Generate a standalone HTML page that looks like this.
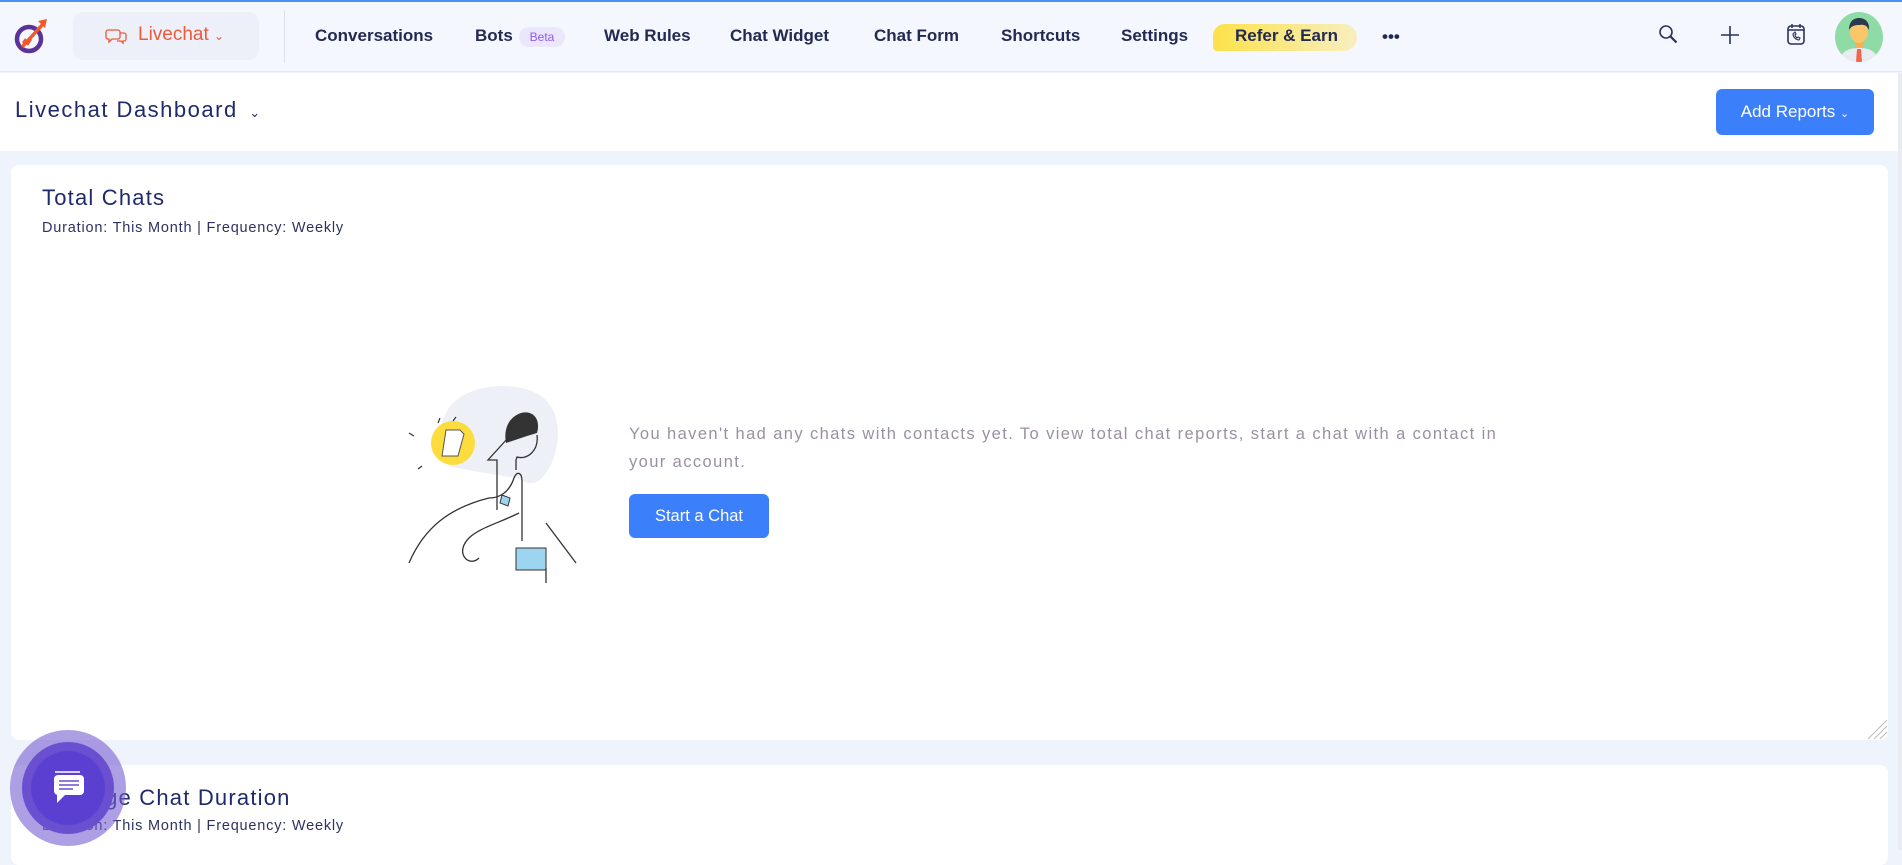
<!DOCTYPE html>
<html><head><meta charset="utf-8"><style>
*{box-sizing:border-box;margin:0;padding:0}
body{width:1902px;height:850px;overflow:hidden;background:#eff3fb;font-family:"Liberation Sans",sans-serif;color:#1c2356;position:relative}
.top{position:absolute;left:0;top:0;width:1902px;height:2px;background:#4a90f0}
.hdr{position:absolute;left:0;top:2px;width:1902px;height:70px;background:#f4f7fd;border-bottom:1px solid #e4e8f2}
.pill{position:absolute;left:73px;top:10px;width:186px;height:48px;background:#eef0f9;border-radius:10px}
.nav{position:absolute;top:24px;font-size:17px;font-weight:bold;color:#232a52}
.bar{position:absolute;left:0;top:73px;width:1902px;height:78px;background:#fff}
.card{position:absolute;left:11px;width:1877px;background:#fff;border-radius:8px}
.t{position:absolute;left:31px;font-size:22px;letter-spacing:1.2px;color:#1f2a6b}
.s{position:absolute;left:31px;font-size:14.5px;letter-spacing:0.8px;color:#2e3260}
</style></head><body>
<div class="top"></div>
<div class="hdr">
<svg style="position:absolute;left:14px;top:15px" width="36" height="38" viewBox="0 0 36 38"><circle cx="15" cy="22" r="12" fill="none" stroke="#5b3396" stroke-width="4.5"/><path d="M8 30 L30 6" stroke="#f0582a" stroke-width="3.5"/><path d="M24 4 L33 2 L31 11Z" fill="#f0582a"/><path d="M9 26l3-4M13 28l4-6" stroke="#f0582a" stroke-width="2.5"/></svg>
<div class="pill"></div>
<svg style="position:absolute;left:105px;top:26px" width="22" height="17" viewBox="0 0 22 17"><path d="M3 2h10a2 2 0 012 2v5a2 2 0 01-2 2H7l-3 3v-3H3a2 2 0 01-2-2V4a2 2 0 012-2z" fill="none" stroke="#ec5a3c" stroke-width="1.3"/><path d="M15 5h4a2 2 0 012 2v4a2 2 0 01-2 2h-1v2l-2-2h-4" fill="none" stroke="#ec5a3c" stroke-width="1.3"/></svg>
<div class="nav" style="left:138px;font-weight:normal;color:#ec5a3c;font-size:19px;top:22px">Livechat <span style="font-size:12px">&#8964;</span></div>
<div style="position:absolute;left:284px;top:9px;width:1px;height:52px;background:#dde1ec"></div>
<div class="nav" style="left:315px">Conversations</div>
<div class="nav" style="left:475px">Bots</div>
<div style="position:absolute;left:519px;top:25px;width:46px;height:20px;border-radius:10px;background:#ece6fd;color:#8a5cf5;font-size:12px;text-align:center;line-height:20px">Beta</div>
<div class="nav" style="left:604px">Web Rules</div>
<div class="nav" style="left:730px">Chat Widget</div>
<div class="nav" style="left:874px">Chat Form</div>
<div class="nav" style="left:1001px">Shortcuts</div>
<div class="nav" style="left:1121px">Settings</div>
<div style="position:absolute;left:1213px;top:22px;width:144px;height:27px;border-radius:12px 14px 14px 4px;background:linear-gradient(90deg,#fde24a,#f7eec0)"></div>
<div class="nav" style="left:1235px;top:24px">Refer &amp; Earn</div>
<div class="nav" style="left:1382px;top:25px">•••</div>
<svg style="position:absolute;left:1658px;top:22px" width="22" height="22" viewBox="0 0 22 22"><circle cx="8" cy="8" r="6" fill="none" stroke="#2a3160" stroke-width="1.6"/><path d="M12.5 12.5l6 6" stroke="#2a3160" stroke-width="2.2"/></svg>
<svg style="position:absolute;left:1720px;top:23px" width="20" height="20"><path d="M10 1v18M1 10h18" stroke="#2a3160" stroke-width="1.6"/></svg>
<svg style="position:absolute;left:1786px;top:20px" width="20" height="24" viewBox="0 0 20 24"><rect x="2" y="4" width="16" height="18" rx="3" fill="none" stroke="#2a3160" stroke-width="1.6"/><path d="M6 2v4M14 2v4M2 8h16" stroke="#2a3160" stroke-width="1.5"/><path d="M7 12c0 3 3 6 6 6l1-2-2-1-1 1c-1-1-2-2-2-3l1-1-1-2z" fill="none" stroke="#2a3160" stroke-width="1.1"/></svg>
<svg style="position:absolute;left:1834px;top:10px" width="50" height="50" viewBox="0 0 50 50"><defs><clipPath id="c"><ellipse cx="25" cy="25" rx="24" ry="25"/></clipPath></defs><g clip-path="url(#c)"><rect width="50" height="50" fill="#8fdba5"/><path d="M6 50c0-10 8-14 19-14s19 4 19 14z" fill="#e8ebef"/><path d="M23 37h4l1 13h-6z" fill="#f2644c"/><rect x="21" y="28" width="8" height="8" fill="#f3b25a"/><ellipse cx="25" cy="20" rx="9" ry="11" fill="#fbc56a"/><path d="M15 18c0-9 5-12 10-12s11 3 10 12c-2-4-4-6-10-5-4 0-8 1-10 5z" fill="#2d3a4d"/></g></svg>
</div>
<div class="bar">
<div style="position:absolute;left:15px;top:24px;font-size:22px;letter-spacing:1.5px;color:#1f2a6b">Livechat Dashboard <span style="font-size:13px;margin-left:4px">&#8964;</span></div>
<div style="position:absolute;left:1716px;top:16px;width:158px;height:46px;background:#3b7ffb;border-radius:6px;color:#fff;font-size:17px;line-height:46px;text-align:center">Add Reports <span style="font-size:11px">&#8964;</span></div>
</div>
<div class="card" style="top:165px;height:575px">
<div class="t" style="top:20px">Total Chats</div>
<div class="s" style="top:55px">Duration: This Month | Frequency: Weekly</div>
<svg style="position:absolute;left:395px;top:208px" width="190" height="210" viewBox="0 0 190 210">
<path d="M40 40c10-25 60-35 90-20 30 15 25 60 10 80-10 15-20 10-30 5l-60-10c-20-5-25-25-10-55z" fill="#edf0f7"/>
<circle cx="47" cy="70" r="22" fill="#fddc3e"/>
<path d="M40 57h14l4 4-6 22h-16l4-26z" fill="#fff" stroke="#555" stroke-width="1"/>
<path d="M3 60l5 3M32 50l2-5M47 48l3-4M16 93l-4 3" stroke="#333" stroke-width="1.2"/>
<path d="M100 70c-2-10 0-25 15-30 12-3 20 6 16 20l-10 3z" fill="#333"/>
<path d="M102 65l-20 22h9v50M131 62c2 16-10 25-20 22l-1 3v10" fill="none" stroke="#333" stroke-width="1.3"/>
<path d="M96 122l8 3-2 8-8-3zM110 175h30v22h-30z" fill="#9dd4f0" stroke="#333" stroke-width="1"/>
<path d="M3 190c15-35 40-55 80-65 10 0 20-5 25-20 3-8 8-5 8 3v60M140 150l30 40M140 195v60M113 140c-20 10-40 15-50 25-15 15 0 30 10 20" fill="none" stroke="#333" stroke-width="1.3"/>
</svg>
<div style="position:absolute;left:618px;top:255px;width:1000px;font-size:16.5px;letter-spacing:1.4px;line-height:28px;color:#9a90a2">You haven't had any chats with contacts yet. To view total chat reports, start a chat with a contact in<br>your account.</div>
<div style="position:absolute;left:618px;top:329px;width:140px;height:44px;background:#3b7ffb;border-radius:6px;color:#fff;font-size:16.5px;line-height:44px;text-align:center">Start a Chat</div>
<svg style="position:absolute;right:0;bottom:0" width="24" height="24"><path d="M4 23L23 4M10 23L23 10M16 23L23 16" stroke="#bbb" stroke-width="1"/></svg>
</div>
<div class="card" style="top:765px;height:100px">
<div class="t" style="top:20px">Average Chat Duration</div>
<div class="s" style="top:53px">Duration: This Month | Frequency: Weekly</div>
</div>
<div style="position:absolute;left:1898px;top:73px;width:4px;height:777px;background:#e9ecf2"></div>
<div style="position:absolute;left:10px;top:730px;width:116px;height:116px;border-radius:50%;background:rgba(120,95,210,.6)"></div>
<div style="position:absolute;left:22px;top:742px;width:92px;height:92px;border-radius:50%;background:#6a4fd1"></div>
<div style="position:absolute;left:31px;top:751px;width:74px;height:74px;border-radius:50%;background:#5a3fd0"></div>
<svg style="position:absolute;left:50px;top:770px" width="38" height="36" viewBox="0 0 38 36"><path d="M5 2h25" stroke="#fff" stroke-width="1.5" fill="none"/><rect x="4" y="5" width="30" height="20" rx="4" fill="#fff"/><path d="M7 25v8l8-8z" fill="#fff"/><path d="M9 11h20M9 15h20M9 19h14" stroke="#6a4fd1" stroke-width="1.6"/></svg>
</body></html>
